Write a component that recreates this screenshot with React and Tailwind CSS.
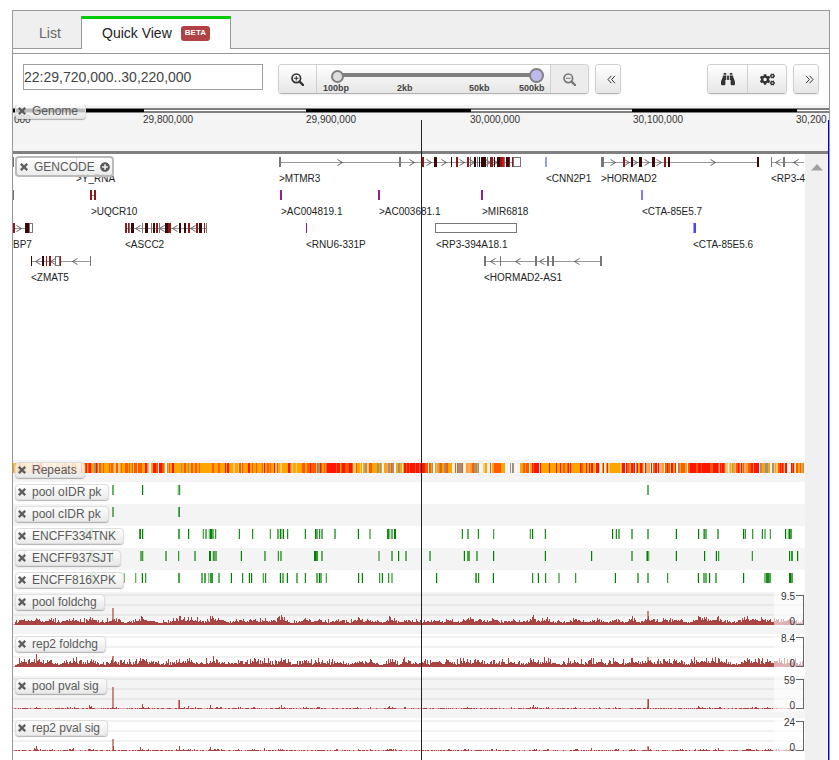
import React from "react";
import { FaTimes, FaPlusCircle, FaBinoculars, FaCogs } from "react-icons/fa";

/* Track canvases are drawn in browser coordinates: x runs from LEFT to RIGHT. */
const LEFT = 13;
const RIGHT = 804;

function seeded(seed) {
  let s = seed;
  return () => {
    s = (s * 1664525 + 1013904223) % 4294967296;
    return s / 4294967296;
  };
}

/* ---------- toolbar ---------- */

const buttonFace =
  "flex items-center justify-center bg-linear-to-b from-white to-[#e6e6e6] text-[#333]";
const buttonFrame =
  "flex h-[30px] shrink-0 overflow-hidden rounded border border-[#d0d0d0] border-b-[#b3b3b3] shadow-[0_1px_2px_rgba(0,0,0,0.08)]";

function Magnifier({ plus }) {
  return (
    <svg width="13" height="13" viewBox="0 0 13 13" fill="none" stroke="currentColor">
      <circle cx="5.3" cy="5.3" r="4.3" strokeWidth="1.7" />
      <path d="M8.6 8.6 L12.1 12.1" strokeWidth="2.2" strokeLinecap="round" />
      <path d={plus ? "M3 5.3 H7.6 M5.3 3 V7.6" : "M3 5.3 H7.6"} strokeWidth="1.1" />
    </svg>
  );
}

function Chevrons({ right }) {
  return (
    <svg width="9" height="9" viewBox="0 0 9 9" fill="none" stroke="currentColor" strokeWidth="1">
      <path
        d={
          right
            ? "M1 0.8 L4.4 4.5 L1 8.2 M4.6 0.8 L8 4.5 L4.6 8.2"
            : "M4.4 0.8 L1 4.5 L4.4 8.2 M8 0.8 L4.6 4.5 L8 8.2"
        }
      />
    </svg>
  );
}

function Toolbar() {
  return (
    <div className="flex h-[51px] items-start px-2.5 pt-2.5">
      <input
        type="text"
        aria-label="Genomic location"
        defaultValue="22:29,720,000..30,220,000"
        className="h-[26px] w-60 border border-[#a0a0a0] bg-white text-sm text-[#444] outline-none"
      />
      <div className={`ml-[15px] ${buttonFrame}`}>
        <button aria-label="Zoom in" className={`w-[37px] ${buttonFace}`}>
          <Magnifier plus />
        </button>
        <div className="w-[235px] border-x border-[#d0d0d0] bg-linear-to-b from-white to-[#e6e6e6]">
          <div className="relative ml-3 mt-[3px] h-[15px] w-[215px]">
            <div className="absolute inset-x-1.5 top-[5px] h-1 bg-[#808080]" />
            <span className="absolute left-0.5 top-0.5 size-[13px] rounded-full border-2 border-[#808080] bg-[#ddd]" />
            <input
              type="range"
              aria-label="Zoom level"
              min="0"
              max="100"
              defaultValue="100"
              className="absolute inset-0 h-[15px] w-full appearance-none bg-transparent [&::-webkit-slider-thumb]:size-[15px] [&::-webkit-slider-thumb]:appearance-none [&::-webkit-slider-thumb]:rounded-full [&::-webkit-slider-thumb]:border-2 [&::-webkit-slider-thumb]:border-solid [&::-webkit-slider-thumb]:border-[#808080] [&::-webkit-slider-thumb]:bg-[#bbbbee]"
            />
          </div>
          <div className="ml-1.5 grid grid-cols-[74px_72px_50px_auto] text-[9px] leading-[10px] font-bold text-[#444]">
            <span>100bp</span>
            <span>2kb</span>
            <span>50kb</span>
            <span>500kb</span>
          </div>
        </div>
        <button aria-label="Zoom out" className="flex w-[37px] items-center justify-center bg-[#ececec] text-[#777]">
          <Magnifier />
        </button>
      </div>
      <div className={`ml-1.5 w-[26px] ${buttonFrame}`}>
        <button aria-label="Step left" className={`w-full pl-1.5 ${buttonFace}`}>
          <Chevrons />
        </button>
      </div>
      <div className={`ml-auto ${buttonFrame}`}>
        <button aria-label="Search" className={`w-[39px] ${buttonFace}`}>
          <FaBinoculars size={14} />
        </button>
        <button aria-label="Options" className={`w-[39px] border-l border-[#d0d0d0] ${buttonFace}`}>
          <FaCogs size={15} />
        </button>
      </div>
      <div className={`ml-1.5 w-[26px] ${buttonFrame}`}>
        <button aria-label="Step right" className={`w-full pl-1.5 ${buttonFace}`}>
          <Chevrons right />
        </button>
      </div>
    </div>
  );
}

/* ---------- track labels ---------- */

function TrackLabel({ name }) {
  return (
    <div className="absolute left-0.5 top-0.5 flex h-4 items-center gap-[5px] rounded border border-[#ddd] bg-linear-to-b from-white/80 to-[#e8e8e8]/85 pl-px pr-[7px] text-xs leading-none text-[#5a5a5a] shadow-[0_1px_1px_rgba(0,0,0,0.3)]">
      <button aria-label={`Remove ${name}`} className="w-2.5">
        <FaTimes size={10} strokeWidth={40} stroke="currentColor" />
      </button>
      <span>{name}</span>
    </div>
  );
}

/* ---------- genome ruler ---------- */

function Ruler() {
  const ticks = [
    [143, "29,800,000"],
    [306, "29,900,000"],
    [470, "30,000,000"],
    [633, "30,100,000"],
    [796, "30,200"],
  ];
  return (
    <div className="relative h-[49px] overflow-hidden border-b-[3px] border-[#808080] bg-[#f4f4f4]">
      <svg className="block h-full w-full" shapeRendering="crispEdges">
        <rect y="3" width="100%" height="5" fill="#808080" />
        <rect y="5" width="100%" height="1" fill="#fff" />
        {[[13, 144], [306, 471], [632, 797]].map(([a, b]) => (
          <rect key={a} x={a - LEFT} y="4" width={b - a} height="3" fill="#000" />
        ))}
        <g fontSize="10" fill="#333">
          <text x="1" y="18">000</text>
          {ticks.map(([x, t]) => (
            <text key={t} x={x - LEFT} y="18">{t}</text>
          ))}
        </g>
      </svg>
      <div className="absolute left-0.5 -top-0.5 flex h-4 items-center gap-[5px] rounded border border-[#ddd] bg-linear-to-b from-white/70 to-[#e8e8e8]/85 pl-px pr-[7px] text-xs leading-none text-[#5a5a5a] shadow-[0_1px_1px_rgba(0,0,0,0.3)]">
        <button aria-label="Remove Genome" className="w-2.5">
          <FaTimes size={10} strokeWidth={40} stroke="currentColor" />
        </button>
        <span>Genome</span>
      </div>
    </div>
  );
}

/* ---------- genes ---------- */

const DARK = "#3a0808";
const RED = "#8b1a1a";
const GRAY = "#777";
const PURPLE = "#902090";
const BLUE = "#7c7cff";

/* bars: [x, width, colour]; arrows: x of each direction mark; boxes: [x, width] */
const genes = [
  { y: 157, label: [279, ">MTMR3"], line: [280, 521], dir: 1, arrows: [340, 412, 429, 444, 462, 472, 488, 495],
    bars: [[279, 2, GRAY], [399, 2, GRAY], [422, 2, RED], [434, 3, DARK], [451, 1, DARK], [456, 2, RED], [467, 2, RED], [470, 1, GRAY], [474, 2, DARK], [477, 1, GRAY], [479, 1, DARK], [481, 5, DARK], [487, 1, GRAY], [490, 3, RED], [494, 1, DARK], [497, 3, DARK], [500, 2, RED], [502, 2, "#e01010"], [504, 1, GRAY], [506, 3, DARK], [509, 1, RED], [512, 1, RED]], boxes: [[513, 7]] },
  { y: 157, label: [76, ">Y_RNA"], bars: [[76, 1, PURPLE]] },
  { y: 157, bars: [[13, 1, GRAY]] },
  { y: 157, label: [546, "<CNN2P1"], bars: [[545, 2, "#9c9cff"]] },
  { y: 157, label: [601, ">HORMAD2"], line: [601, 758], dir: 1, arrows: [613, 627, 635, 647, 659, 713],
    bars: [[601, 3, GRAY], [623, 2, RED], [631, 2, DARK], [639, 3, DARK], [652, 3, DARK], [664, 2, RED], [668, 2, DARK], [757, 2, DARK]] },
  { y: 157, label: [771, "<RP3-4"], line: [772, 804], dir: -1, arrows: [778, 796], bars: [[771, 1, GRAY], [783, 2, GRAY]] },
  { y: 190, label: [91, ">UQCR10"], line: [91, 95], bars: [[90, 2, RED], [94, 2, RED]] },
  { y: 190, bars: [[13, 1, GRAY]] },
  { y: 190, label: [281, ">AC004819.1"], bars: [[280, 2, PURPLE]] },
  { y: 190, label: [379, ">AC003681.1"], bars: [[378, 2, PURPLE]] },
  { y: 190, label: [482, ">MIR6818"], bars: [[481, 2, PURPLE]] },
  { y: 190, label: [642, "<CTA-85E5.7"], bars: [[641, 2, BLUE]] },
  { y: 223, label: [13, "BP7"], line: [13, 27], dir: 1, arrows: [19], bars: [[13, 2, RED], [25, 5, DARK]], boxes: [[29, 3]] },
  { y: 223, label: [125, "<ASCC2"], line: [125, 207], dir: -1, arrows: [138, 162, 175, 193],
    bars: [[125, 2, RED], [128, 1, RED], [129, 1, GRAY], [131, 3, DARK], [142, 1, GRAY], [145, 3, DARK], [151, 1, GRAY], [153, 2, DARK], [156, 2, RED], [159, 1, GRAY], [165, 3, DARK], [168, 3, RED], [179, 2, DARK], [184, 2, DARK], [188, 2, RED], [196, 2, RED], [199, 3, DARK], [204, 1, RED], [206, 1, GRAY]] },
  { y: 223, label: [306, "<RNU6-331P"], bars: [[306, 1, PURPLE]] },
  { y: 223, label: [436, "<RP3-394A18.1"], bars: [], boxes: [[435, 81]] },
  { y: 223, label: [693, "<CTA-85E5.6"], bars: [[693, 1, "#9c9cff"], [694, 2, "#4444ff"]] },
  { y: 256, label: [31, "<ZMAT5"], line: [31, 90], dir: -1, arrows: [38, 53, 75],
    bars: [[31, 1, DARK], [42, 2, DARK], [46, 1, RED], [49, 2, RED], [60, 1, RED], [90, 1, GRAY]], boxes: [[55, 4]] },
  { y: 256, label: [484, "<HORMAD2-AS1"], line: [485, 601], dir: -1, arrows: [493, 518, 542, 577],
    bars: [[484, 2, GRAY], [500, 1, GRAY], [535, 2, GRAY], [547, 2, GRAY], [552, 2, GRAY], [600, 2, GRAY]] },
];

function Gene({ gene }) {
  const { y, label, line, dir, arrows = [], bars, boxes = [] } = gene;
  const mid = y + 5;
  return (
    <g>
      {line && <rect x={line[0]} y={mid} width={line[1] - line[0]} height="1" fill="#999" shapeRendering="crispEdges" />}
      {arrows.map((x) => (
        <path key={x} d={`M${x - 2.5 * dir} ${mid - 2.5} L${x + 2.5 * dir} ${mid + 0.5} L${x - 2.5 * dir} ${mid + 3.5}`} fill="none" stroke="#555" strokeWidth="0.9" />
      ))}
      {bars.map(([x, w, c]) => (
        <rect key={x} x={x} y={y} width={w} height="10" fill={c} shapeRendering="crispEdges" />
      ))}
      {boxes.map(([x, w]) => (
        <rect key={x} x={x + 0.5} y={y + 0.5} width={w} height="9" fill="#fff" stroke="#777" />
      ))}
      {label && <text x={label[0]} y={y + 25} fontSize="10" fill="#222">{label[1]}</text>}
    </g>
  );
}

function GeneTrack() {
  return (
    <div className="relative h-[306px]">
      <svg className="block h-full w-full">
        <g transform="translate(-13 -154)">
          {genes.map((g, i) => (
            <Gene key={i} gene={g} />
          ))}
        </g>
      </svg>
      <div className="absolute left-0.5 top-0.5 flex h-[21px] items-center gap-[5px] rounded border-2 border-[#bbb] bg-linear-to-b from-white/80 to-[#e8e8e8]/85 px-0.5 text-xs leading-none text-[#5a5a5a]">
        <button aria-label="Remove GENCODE" className="w-2.5">
          <FaTimes size={10} strokeWidth={40} stroke="currentColor" />
        </button>
        <span>GENCODE</span>
        <button aria-label="Expand GENCODE">
          <FaPlusCircle size={10} />
        </button>
      </div>
    </div>
  );
}

/* ---------- repeats ---------- */

/* [from, to, palette]; o orange, d deep orange, r red, l light orange, g gray, p pink, . gap */
const repeatZones = [
  [13, 84, "oolpr.dlo"],
  [84, 97, "rdogroo"],
  [97, 145, "ooodddol"],
  [145, 174, "rdpg.oro"],
  [174, 204, "ooodgdoo"],
  [204, 280, "oodododrol"],
  [280, 302, "ooorglo"],
  [302, 327, "drdogld"],
  [327, 335, "rrrrd"],
  [335, 353, "odrrrrdr"],
  [353, 380, "ooold.og"],
  [380, 404, "gool.dpog"],
  [404, 427, "rrrdrrd"],
  [427, 470, "op.oodgl."],
  [470, 494, "oodg..l."],
  [494, 503, "dog"],
  [503, 520, "..og.g"],
  [520, 540, ".oodr.d"],
  [540, 592, "oodorro"],
  [592, 622, "oo.oldor"],
  [622, 640, "drrog."],
  [640, 668, "oo.pdrrl"],
  [668, 690, "oodrlgd."],
  [690, 726, "rrrrdrdp"],
  [726, 735, ".gol"],
  [735, 755, "rrdorpd"],
  [755, 768, "r.g.o."],
  [768, 785, "oodrgl."],
  [785, 794, "rrd.gr"],
  [794, 804, "oogdl."],
];
const repeatColors = { o: "#ffa500", d: "#ff5a00", r: "#ff1400", l: "#ffc870", g: "#a09080", p: "#f8a0a0" };

function RepeatTrack() {
  const rnd = seeded(42);
  const strips = [];
  for (const [a, b, palette] of repeatZones) {
    let x = a;
    while (x < b) {
      const w = Math.min(b - x, rnd() < 0.65 ? 1 : 2);
      const key = palette[Math.floor(rnd() * palette.length)];
      if (key !== ".") strips.push(<rect key={x} x={x - LEFT} y="3" width={w} height="10" fill={repeatColors[key]} />);
      x += w;
    }
  }
  return (
    <svg className="block h-full w-full" shapeRendering="crispEdges">
      {strips}
    </svg>
  );
}

/* ---------- peak calls: [x, width, opacity] ---------- */

const peaks = {
  oidr: [[112, 2, 0.5], [142, 1, 1], [178, 1, 0.5], [179, 1, 0.8], [647, 2, 0.5]],
  cidr: [[112, 2, 0.5], [178, 1, 0.5], [179, 1, 0.8]],
  tnk: [[24, 1, 0.5], [49, 1, 0.5], [67, 1, 0.5], [85, 3, 0.4], [90, 3, 0.5], [99, 1, 0.5], [112, 1, 0.5], [139, 1, 0.7], [140, 1, 0.9], [142, 1, 1], [178, 2, 0.6], [188, 1, 1], [203, 1, 0.7], [205, 2, 0.5], [209, 1, 0.5], [210, 2, 0.9], [212, 2, 0.5], [215, 1, 0.8], [239, 1, 0.9], [252, 1, 0.9], [270, 1, 0.7], [277, 2, 0.5], [280, 1, 1], [281, 1, 0.4], [283, 1, 1], [287, 1, 0.9], [305, 1, 0.9], [315, 1, 1], [316, 2, 0.5], [319, 1, 0.9], [321, 2, 0.5], [334, 2, 0.5], [358, 1, 1], [369, 2, 0.4], [387, 2, 0.8], [389, 1, 0.5], [391, 2, 0.5], [394, 2, 0.9], [462, 1, 0.9], [467, 2, 0.5], [478, 1, 0.9], [493, 1, 0.7], [530, 1, 0.7], [532, 1, 1], [545, 1, 0.9], [612, 1, 1], [616, 1, 0.9], [618, 2, 0.5], [631, 2, 0.5], [647, 2, 0.5], [676, 1, 1], [698, 1, 1], [703, 2, 0.4], [704, 3, 0.5], [717, 2, 0.5], [743, 1, 1], [745, 1, 0.8], [752, 1, 0.8], [762, 1, 0.9], [764, 2, 0.4], [770, 1, 0.7], [785, 1, 1], [788, 1, 0.5], [789, 1, 1], [790, 2, 0.6]],
  sjt: [[24, 1, 0.6], [62, 1, 0.5], [73, 1, 0.5], [90, 3, 0.5], [102, 1, 0.6], [112, 1, 0.7], [140, 2, 0.5], [142, 1, 0.8], [165, 2, 0.5], [178, 1, 0.8], [194, 2, 0.5], [209, 2, 0.9], [213, 1, 0.8], [214, 3, 0.5], [241, 1, 1], [264, 2, 0.5], [278, 1, 0.8], [280, 2, 0.5], [314, 2, 1], [316, 2, 0.7], [321, 2, 0.5], [378, 2, 0.4], [391, 2, 0.5], [398, 1, 1], [405, 2, 0.5], [429, 2, 0.5], [464, 1, 1], [467, 3, 0.6], [476, 2, 0.5], [493, 1, 1], [545, 1, 1], [591, 1, 1], [631, 2, 0.5], [646, 1, 0.4], [647, 1, 1], [648, 1, 0.6], [676, 1, 1], [704, 1, 1], [716, 1, 1], [718, 1, 0.8], [752, 1, 0.8], [789, 1, 1], [791, 2, 0.7], [797, 1, 1]],
  xpk: [[90, 3, 0.5], [94, 2, 0.4], [106, 1, 0.5], [112, 1, 0.5], [124, 1, 0.5], [135, 1, 0.6], [142, 1, 1], [145, 1, 0.8], [178, 2, 0.6], [201, 2, 0.5], [204, 2, 0.6], [208, 1, 0.5], [210, 3, 0.7], [218, 2, 0.5], [231, 1, 1], [242, 1, 0.9], [249, 1, 1], [251, 1, 1], [263, 1, 0.7], [265, 1, 0.9], [280, 1, 1], [282, 2, 0.5], [287, 1, 1], [296, 2, 0.5], [305, 1, 0.9], [316, 2, 0.5], [319, 1, 1], [320, 2, 0.5], [326, 1, 0.7], [358, 1, 1], [362, 1, 1], [379, 1, 0.8], [382, 1, 1], [388, 1, 0.8], [391, 2, 0.4], [436, 1, 1], [475, 2, 0.6], [478, 1, 0.9], [493, 1, 1], [532, 1, 0.9], [538, 1, 1], [545, 1, 0.9], [558, 2, 0.4], [575, 1, 0.8], [615, 1, 1], [637, 2, 0.5], [647, 2, 0.5], [667, 1, 0.8], [698, 1, 1], [703, 2, 0.5], [705, 2, 0.5], [709, 1, 1], [715, 2, 0.5], [743, 1, 1], [764, 2, 0.4], [766, 3, 0.8], [769, 2, 0.6], [789, 2, 1], [791, 2, 0.6]],
};

function PeakTrack({ data }) {
  return (
    <svg className="block h-full w-full" shapeRendering="crispEdges">
      {data.map(([x, w, o], i) => (
        <g key={i} fill="#008000">
          <rect x={x - LEFT} y="3" width={w} height="10" fillOpacity={w > 1 ? Math.min(1, o + 0.1) : o} />
          {w === 1 && <rect x={x - LEFT + (i % 2 ? 1 : -1)} y="3" width="1" height="10" fillOpacity="0.2" />}
        </g>
      ))}
    </svg>
  );
}

/* ---------- signal tracks ---------- */

const hills = [
  [24, 3], [36, 3], [50, 2], [67, 3], [76, 2], [91, 3], [113, 3], [141, 4], [150, 2], [179, 3], [188, 3], [196, 2],
  [212, 4], [221, 3], [239, 3], [253, 3], [265, 2], [281, 4], [305, 3], [319, 3], [337, 2], [358, 3], [370, 2],
  [390, 4], [405, 2], [436, 2], [450, 2], [466, 3], [478, 3], [493, 3], [512, 2], [533, 4], [546, 3], [575, 3],
  [599, 2], [615, 3], [632, 3], [648, 3], [665, 3], [678, 3], [698, 3], [706, 4], [718, 4], [745, 4], [755, 3],
  [767, 3], [778, 2], [790, 4],
];

function signalPath(seed, noise, hillScale, spikes) {
  const rnd = seeded(seed);
  let d = "";
  for (let x = LEFT + 2; x < RIGHT; x++) {
    let h = noise > 1 ? 2 + rnd() * rnd() * noise : rnd() < 0.4 ? 1 : 0;
    for (const [c, amp] of hills) {
      const k = Math.abs(x - c);
      if (k < 8) h += amp * hillScale * (1 - k / 8) * (0.45 + rnd() * 0.75);
    }
    h = Math.round(h);
    if (h > 0) d += `M${x - LEFT} 33v-${h}h1v${h}z`;
  }
  for (const [x, h] of spikes) d += `M${x - LEFT} 33v-${h}h1v${h}z`;
  return d;
}

const signals = [
  { name: "pool foldchg", max: "9.5", shaded: true,
    path: signalPath(7, 5, 0.95, [[142, 8], [179, 9], [188, 8], [210, 9], [281, 9], [389, 9], [533, 10], [648, 9], [698, 9], [718, 8]]), tall: [[112, 17], [647, 14]] },
  { name: "rep2 foldchg", max: "8.4", shaded: false,
    path: signalPath(31, 7, 0.9, [[36, 13], [34, 8], [73, 9], [112, 9], [140, 9], [179, 7], [264, 9], [281, 9], [463, 9], [581, 8], [591, 9], [663, 7], [718, 9]]), tall: [[112, 11], [647, 10]] },
  { name: "pool pval sig", max: "59", shaded: true,
    path: signalPath(13, 1, 0.25, [[89, 4], [91, 3], [142, 5], [179, 9], [188, 3], [210, 4], [281, 4], [389, 3], [533, 4], [648, 10], [698, 3]]), tall: [[112, 22], [178, 9], [647, 10]] },
  { name: "rep2 pval sig", max: "24", shaded: false,
    path: signalPath(99, 1, 0.3, [[34, 3], [36, 5], [73, 3], [113, 5], [140, 4], [179, 5], [210, 4], [264, 3], [591, 3], [648, 4], [718, 3]]), tall: [[112, 12], [647, 5]] },
];

function SignalTrack({ signal }) {
  const rule = signal.shaded ? "#e8e8e8" : "#f2f2f2";
  return (
    <div className={`relative h-[42px] ${signal.shaded ? "bg-[#f4f4f4]" : "bg-white"}`}>
      <svg className="block h-full w-full">
        <g shapeRendering="crispEdges">
          {[2, 12, 22].map((y) => (
            <rect key={y} y={y} width="100%" height="2" fill={rule} />
          ))}
          <rect x="0" y="32" width="791" height="1" fill="#a94442" fillOpacity="0.4" />
          <path d={signal.path} fill="#a94442" />
          {signal.tall.map(([x, h]) => (
            <rect key={x} x={x - LEFT} y={33 - h} width="2" height={h} fill="#a94442" fillOpacity="0.6" />
          ))}
          <rect x="761" y="0" width="30" height="36" fill="#fff" fillOpacity="0.6" />
          <path d="M783 3h8v30h-8v-1h7v-28h-7z" fill="#666" />
        </g>
        <g fontSize="10" fill="#333" textAnchor="end">
          <text x="782" y="8">{signal.max}</text>
          <text x="782" y="33">0</text>
        </g>
      </svg>
      <TrackLabel name={signal.name} />
    </div>
  );
}

function Row({ name, shaded, children }) {
  return (
    <div className={`relative h-[22px] ${shaded ? "bg-[#f4f4f4]" : "bg-white"}`}>
      {children}
      <TrackLabel name={name} />
    </div>
  );
}

export default function App() {
  return (
    <div className="min-h-screen bg-white pl-3 pr-[9px] pt-2.5 font-['Liberation_Sans',Arial,sans-serif]">
      <main className="relative border-x border-t border-[#999]">
        <nav className="flex h-[38px] items-end border-b border-[#999] bg-[#efefef]">
          <button className="flex h-[30px] w-[68px] items-center pl-[26px] text-sm text-[#666]">List</button>
          <button className="-mb-px flex h-[33px] w-[150px] items-center gap-2 border-x border-t-3 border-x-[#999] border-t-[#00cc00] bg-white pl-5 pb-0.5 text-sm text-[#222]">
            <span>Quick View</span>
            <span className="ml-px flex h-[15px] items-center rounded-[3px] bg-[#b04144] px-1 text-[8px] font-bold text-white">BETA</span>
          </button>
        </nav>
        <div className="h-[5px] border-b border-[#999] bg-white" />
        <Toolbar />
        <Ruler />
        <div className="flex">
          <div className="min-w-0 flex-1 overflow-hidden">
            <GeneTrack />
            <Row name="Repeats" shaded><RepeatTrack /></Row>
            <Row name="pool oIDR pk"><PeakTrack data={peaks.oidr} /></Row>
            <Row name="pool cIDR pk" shaded><PeakTrack data={peaks.cidr} /></Row>
            <Row name="ENCFF334TNK"><PeakTrack data={peaks.tnk} /></Row>
            <Row name="ENCFF937SJT" shaded><PeakTrack data={peaks.sjt} /></Row>
            <Row name="ENCFF816XPK"><PeakTrack data={peaks.xpk} /></Row>
            {signals.map((s) => (
              <SignalTrack key={s.name} signal={s} />
            ))}
          </div>
          <div className="flex w-6 shrink-0 justify-center bg-[#f0f0f0] pt-2.5">
            <svg width="12" height="7" viewBox="0 0 12 7">
              <path d="M6 0 L12 6.5 H0 Z" fill="#a0a0a0" />
            </svg>
          </div>
        </div>
        <div className="absolute bottom-0 left-[408px] top-[109px] w-px bg-[#222]" />
        <div className="absolute bottom-0 right-0 top-[109px] w-px bg-[#0000ff]" />
      </main>
    </div>
  );
}
